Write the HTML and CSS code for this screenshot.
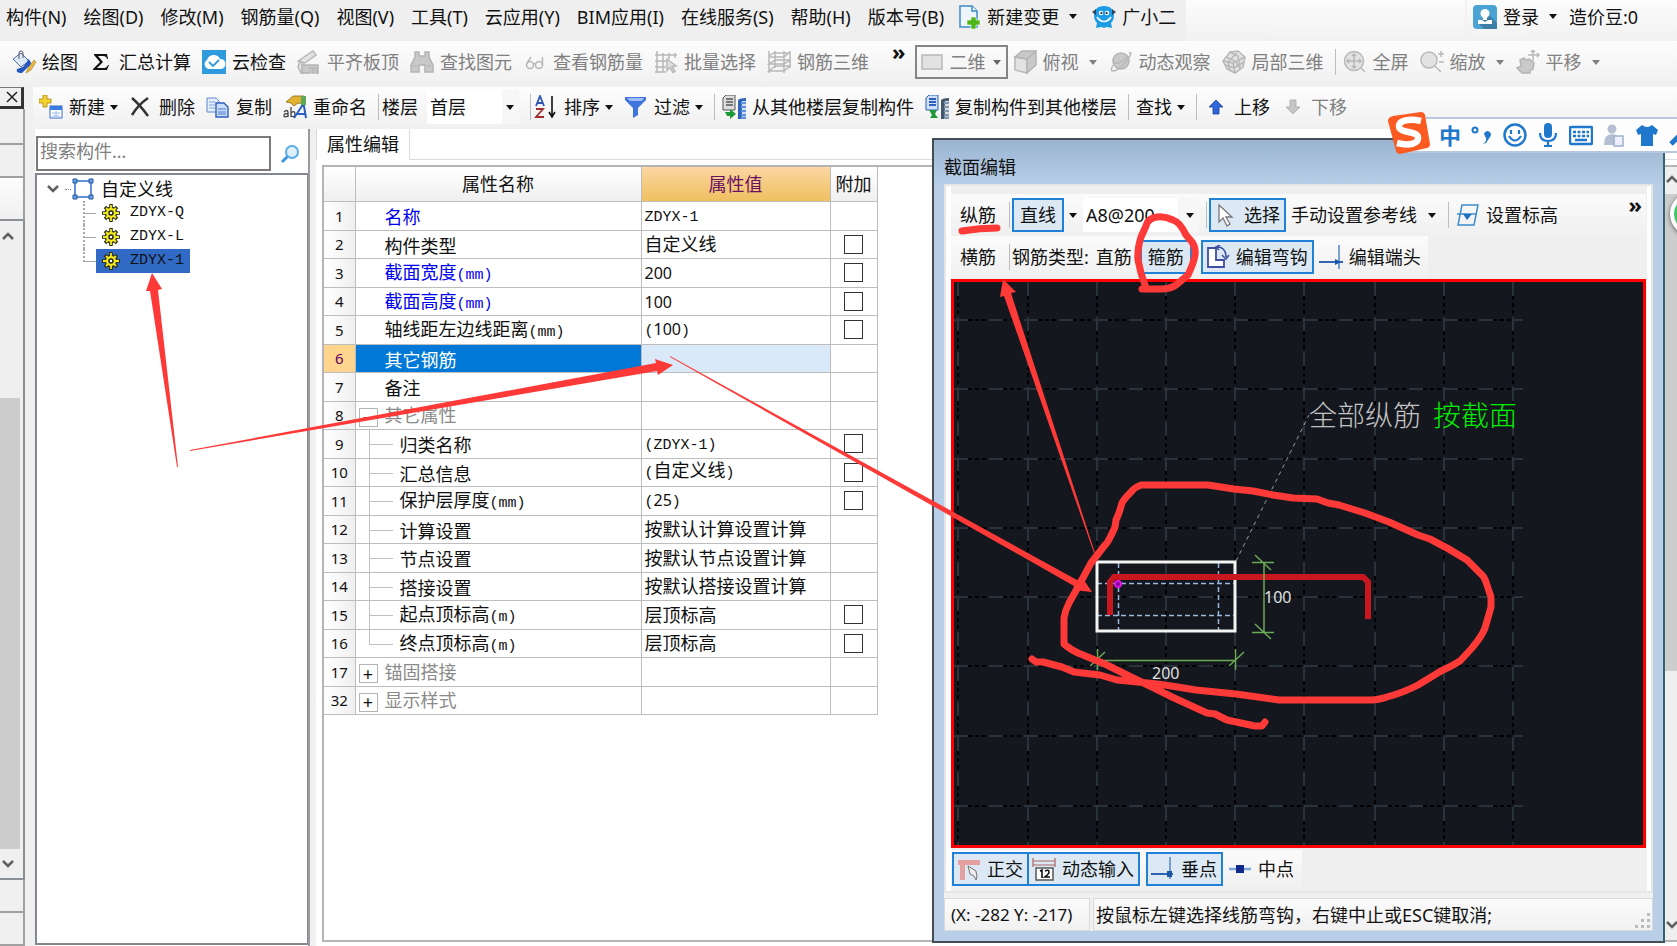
FILE: index.html
```html
<!DOCTYPE html>
<html lang="zh-CN">
<head>
<meta charset="utf-8">
<title>属性编辑</title>
<link rel="stylesheet" href="styles.css">
</head>
<body>
<header class="menubar">
  <nav class="menus">
    <button class="menu">构件(N)</button>
    <button class="menu">绘图(D)</button>
    <button class="menu">修改(M)</button>
    <button class="menu">钢筋量(Q)</button>
    <button class="menu">视图(V)</button>
    <button class="menu">工具(T)</button>
    <button class="menu">云应用(Y)</button>
    <button class="menu">BIM应用(I)</button>
    <button class="menu">在线服务(S)</button>
    <button class="menu">帮助(H)</button>
    <button class="menu">版本号(B)</button>
    <button class="tool first"><svg class="icon" viewBox="0 0 24 24"><path d="M3 1h12l5 5v16H3z" fill="#eef6fc" stroke="#3b8cc9" stroke-width="1.5"/><path d="M15 1v5h5" fill="#fff" stroke="#3b8cc9" stroke-width="1.5"/><path d="M14 12h5v3h4v5h-4v4h-5v-4h-4v-5h4z" fill="#4eb51a" stroke="#fff" stroke-width=".6"/></svg>新建变更<i class="caret wide"></i></button>
    <button class="tool"><svg class="icon" viewBox="0 0 24 24"><path d="M12 1c7 0 10 4 10 9 0 4-1 6-3 8l1 5-5-1-3 1-3-1-5 1 1-5c-2-2-3-4-3-8 0-5 3-9 10-9z" fill="#1d9ce6"/><path d="M0 7l4-3v6zM24 7l-4-3v6z" fill="#33475a"/><circle cx="9" cy="8" r="2.200" fill="#fff"/><circle cx="15" cy="8" r="2.200" fill="#fff"/><circle cx="9.400" cy="8" r="1.100" fill="#123"/><circle cx="14.600" cy="8" r="1.100" fill="#123"/><path d="M5 12c4 6 10 6 14 0" stroke="#fff" stroke-width="1.600" fill="none"/></svg>广小二</button>
  </nav>
  <div class="menufill"></div>
  <div class="account">
    <button class="tool"><svg class="icon" viewBox="0 0 24 24"><rect width="24" height="24" rx="4" fill="#4ba3d3"/><path d="M15 9l9 9v6H11l-5-5z" fill="#3b7fa6"/><circle cx="12" cy="8.500" r="4.500" fill="#fff"/><path d="M10 11h4v4h-4zM5 15h4l3 2 3-2h4v4H5z" fill="#fff"/></svg>登录<i class="caret wide"></i></button>
    <button class="menu">造价豆:0</button>
  </div>
</header>

<div class="toolbar main-tools">
  <button class="tool"><svg class="icon" viewBox="0 0 24 24"><path d="M1 9l8-6 8 8-8 6z" fill="#dfe9f6" stroke="#4a6fa5"/><path d="M7 9V3a2 2 0 0 1 4 0v5" fill="none" stroke="#556"/><path d="M16 9c4 3 4 6 0 8l-6 6c-4 0-6-1-5-4l6-2 4-5z" fill="#2456c2"/><path d="M22 10l2 2-5 8-5 3 2-5z" fill="#e8b64c" stroke="#a67a20" stroke-width=".6"/></svg>绘图</button>
  <button class="tool"><svg class="icon" viewBox="0 0 24 24"><path d="M5 4h13l1 5h-1c-.5-2-1.500-3-4-3H9l5 6-6 6h7c2 0 3-1 4-3h1l-2 5H4v-1l7-7-6-7z" fill="#111"/></svg>汇总计算</button>
  <button class="tool"><svg class="icon" viewBox="0 0 24 24"><rect width="24" height="24" fill="#2f9bdc"/><path d="M6 19a5 5 0 0 1-1-9 7 7 0 0 1 13-1 5 5 0 0 1 1 10z" fill="#fff"/><path d="M7 12l4 4 6-6" stroke="#2f9bdc" stroke-width="1.800" fill="none"/></svg>云检查</button>
  <button class="tool" disabled><svg class="icon off" viewBox="0 0 24 24"><path class="pale" d="M1 11L16 1l3 4L8 13z"/><path class="pale" d="M3 11l5 5-2 7H4l-3-6z"/><path class="solid" d="M5 15h16v8h-2v-5h-2v5h-2v-5h-2v5H5z"/></svg>平齐板顶</button>
  <button class="tool" disabled><svg class="icon off" viewBox="0 0 24 24"><path class="solid" d="M5 2h4v4h6V2h4v5l4 8v7h-8v-7H9v7H1v-7l4-8z"/><path d="M3 16h4M17 16h4" stroke="#eee"/></svg>查找图元</button>
  <button class="tool" disabled><svg class="icon off" viewBox="0 0 24 24"><circle cx="7" cy="15" r="3.500"/><circle cx="16" cy="15" r="3.500"/><path d="M3.500 14L8 7M19.500 15V7M10.500 14q1-1 2 0"/></svg>查看钢筋量</button>
  <button class="tool" disabled><svg class="icon off" viewBox="0 0 24 24"><path d="M3 1v22M1 5h22M1 11h12M1 17h11M1 22h11M9 3v19M15 3v6M21 3v5"/><path class="pale" d="M13 9l9 7-4 .5 3 5-2 1-3-5-3 3z"/></svg>批量选择</button>
  <button class="tool" disabled><svg class="icon off" viewBox="0 0 24 24"><path d="M2 1v22M8 1v17M17 1v22M23 1v17M2 6l6-4M2 7h15l6-5M8 3h15M2 21l6-5h15l-6 5zM2 14l6-4h15l-6 4z"/></svg>钢筋三维</button>
  <button class="more">»</button>
  <label class="combo view-mode"><svg class="icon off" viewBox="0 0 24 24"><rect class="pale" x="2" y="5" width="20" height="14"/></svg><select disabled aria-label="视图模式"><option>二维</option></select></label>
  <button class="tool" disabled><svg class="icon off" viewBox="0 0 24 24"><path class="pale" d="M2 7v13l12 3V9z"/><path class="solid" d="M2 7l7-6h14l-9 8zM14 9l9-8v14l-9 8z"/></svg>俯视<i class="caret wide"></i></button>
  <button class="tool" disabled><svg class="icon off" viewBox="0 0 24 24"><circle class="solid" cx="12" cy="11" r="8"/><path d="M4 15c-5 9 3 7 10 0S24 1 20 3"/><path d="M5 13c6 1 10-2 14-7" stroke="#eee"/></svg>动态观察</button>
  <button class="tool" disabled><svg class="icon off" viewBox="0 0 24 24"><path class="pale" d="M8 2l8-1 7 6-2 10-8 6-8-4-4-8z"/><path d="M1 11l10 2 2 10M11 13L23 7M8 2l8 4 2 13M4 7l9 4 6 8M3 15l9 3 10-6M8 21L6 12l9-9"/></svg>局部三维</button>
  <i class="sep"></i>
  <button class="tool" disabled><svg class="icon off" viewBox="0 0 24 24"><circle class="pale" cx="11" cy="11" r="9.500"/><path d="M11 4v14M4 11h14M9 6l2-2 2 2M9 16l2 2 2-2M6 9l-2 2 2 2M16 9l2 2-2 2"/><path d="M18 18l4 4" stroke-width="4"/></svg>全屏</button>
  <button class="tool" disabled><svg class="icon off" viewBox="0 0 24 24"><circle class="pale" cx="9" cy="10" r="8"/><path d="M15 16l6 6" stroke-width="4"/><path d="M21 1v6M18 4h6M19 12h5"/></svg>缩放<i class="caret wide"></i></button>
  <button class="tool" disabled><svg class="icon off" viewBox="0 0 24 24"><path class="solid" d="M4 10l4-2 2 2 3-1 5 4-1 6-3 2v2H6l-5-5 4-2z"/><path d="M17 0v11M12 5h11M15 2l2-2 2 2M21 3l2 2-2 2"/></svg>平移<i class="caret wide"></i></button>
</div>

<main class="workspace">
  <aside class="rail">
    <button class="rail-close" aria-label="关闭"><svg viewBox="0 0 12 12"><path d="M1 1l10 10M11 1L1 11"/></svg></button>
    <div class="rail-box top"></div>
    <div class="rail-box"></div>
    <div class="rail-box light"></div>
    <div class="rail-scroll">
      <svg class="chev" viewBox="0 0 12 12"><path d="M1 9l5-5 5 5"/></svg>
      <div class="rail-gap"></div>
      <div class="thumb"></div>
      <svg class="chev" viewBox="0 0 12 12"><path d="M1 3l5 5 5-5"/></svg>
    </div>
    <div class="rail-box"></div>
    <div class="rail-box"></div>
  </aside>
  <div class="work">
    <div class="toolbar list-tools">
      <button class="tool"><svg class="icon" viewBox="0 0 24 24"><path d="M4 0h4v4h4v4H8v4H4V8H0V4h4z" fill="#f6d22c" stroke="#a98510" stroke-width=".8"/><rect x="11" y="11" width="12" height="12" fill="#fff" stroke="#3b6fd0"/><path d="M11 11h12v4H11z" fill="#3b7be0"/><path d="M13 18h8M13 21h8M17 16v6" stroke="#9bb8e8"/></svg>新建<i class="caret"></i></button>
      <button class="tool"><svg class="icon" viewBox="0 0 24 24"><path d="M3 3q8 7 16 18M19 3Q9 10 3 20" stroke="#333" stroke-width="2.500" fill="none"/></svg>删除</button>
      <button class="tool"><svg class="icon" viewBox="0 0 24 24"><path d="M1 3h9l3 3v11H1z" fill="#e6effc" stroke="#5a86c8"/><path d="M3 7h6M3 10h6M3 13h6" stroke="#7fa3da"/><path d="M10 8h8l4 4v10H10z" fill="#c9dcf8" stroke="#2f5fb8" stroke-width="1.400"/><path d="M12 14h8M12 17h8M12 19h8" stroke="#4b7bd0"/></svg>复制</button>
      <button class="tool"><svg class="icon" viewBox="0 0 24 24"><path d="M3 7l7-6h11v8l-6-1-4 3-3-3z" fill="#e2b22e" stroke="#8a6a14" stroke-width=".8"/><path d="M18 1h5v9h-5z" fill="#5ea85a"/><path d="M1 17q3-3 4 0v5M5 19q-4-1-4 1.500T5 21M8 12v10M8 18q4-3 4 1t-4 2" stroke="#444" fill="none" stroke-width="1.300"/><path d="M11 23l8-12h2l2 12M14 19h8" stroke="#2c5fc0" stroke-width="2" fill="none"/></svg>重命名</button>
      <i class="sep tight"></i>
      <label class="lbl" for="floor">楼层</label>
      <span class="combo flat floor"><select id="floor"><option>首层</option></select></span>
      <i class="sep tight"></i>
      <button class="tool"><svg class="icon" viewBox="0 0 24 24"><path d="M2 11l4-10 4 10M3.500 8h5" stroke="#2f55b0" stroke-width="1.800" fill="none"/><path d="M2 14h7l-7 8h8" stroke="#a02c2c" stroke-width="1.800" fill="none"/><path d="M18 1v20M15 17l3 5 3-5" stroke="#111" stroke-width="1.600" fill="none"/></svg>排序<i class="caret"></i></button>
      <button class="tool"><svg class="icon" viewBox="0 0 24 24"><path d="M1 2h21v3l-8 8v7l-5 3V13L1 5z" fill="#3f74dd"/><path d="M3 3h17l-2 3H6z" fill="#9dbdf5"/></svg>过滤<i class="caret"></i></button>
      <i class="sep"></i>
      <button class="tool"><svg class="icon" viewBox="0 0 24 24"><path d="M1 3l3-3h9v15H1z" fill="#ddd" stroke="#555"/><path d="M4 4h7M4 7h7M4 10h7" stroke="#555" stroke-width="1.500"/><path d="M16 5q2-2 8-2v3h-4v18h-4z" fill="#2f64b8"/><path d="M19 8h5M19 12h5M19 16h5M19 20h5M19 23h5" stroke="#5d93dc" stroke-width="2.500"/><path d="M3 17h5v-3l6 5-6 5v-3H5z" fill="#1d9a35"/></svg>从其他楼层复制构件</button>
      <button class="tool"><svg class="icon" viewBox="0 0 24 24"><path d="M1 3l3-3h9v15H1z" fill="#cfe0fb" stroke="#2f5fb8"/><path d="M4 4h7M4 7h7M4 10h7" stroke="#2f5fb8" stroke-width="1.800"/><path d="M16 5q2-2 8-2v3h-4v18h-4z" fill="#43586f"/><path d="M19 8h5M19 12h5M19 16h5M19 20h5M19 23h5" stroke="#7f97b0" stroke-width="2.500"/><path d="M4 15l8 0-2 4 3 4H5l2-3z" fill="#1d9a35"/></svg>复制构件到其他楼层</button>
      <i class="sep"></i>
      <button class="tool">查找<i class="caret"></i></button>
      <i class="sep"></i>
      <button class="tool"><svg class="icon" viewBox="0 0 24 24"><path d="M12 5l7 7h-4v7H9v-7H5z" fill="#2f66d8" stroke="#1d449a" stroke-width=".8"/></svg>上移</button>
      <button class="tool" disabled><svg class="icon" viewBox="0 0 24 24"><path d="M12 19l-7-7h4V5h6v7h4z" fill="#c6c6c6" stroke="#aaa" stroke-width=".8"/></svg>下移</button>
    </div>
    <div class="panes">
      <section class="tree-pane">
        <div class="search">
          <input type="text" placeholder="搜索构件…" aria-label="搜索构件">
          <button class="search-btn" aria-label="搜索"><svg viewBox="0 0 20 20"><path d="M8 12l-6 6" stroke="#3d94dc" stroke-width="3"/><circle cx="12" cy="8" r="6" fill="#dff0fc" stroke="#58aee8" stroke-width="2"/></svg></button>
        </div>
        <div class="tree">
          <div class="node root">
            <svg class="chev" viewBox="0 0 12 12"><path d="M1 3l5 5 5-5"/></svg>
            <i class="dots"></i>
            <svg class="shape" viewBox="0 0 22 22"><path d="M3 3h16v16H3z" fill="#fff" stroke="#2f6fc4" stroke-width="1.500"/><path d="M1 1h4v4H1zM17 1h4v4h-4zM1 17h4v4H1zM17 17h4v4h-4z" fill="#6ea0e0" stroke="#1c56a8"/></svg>
            <span>自定义线</span>
          </div>
          <div class="node leaf"><i class="dots"></i><button class="item"><svg class="gear" viewBox="0 0 18 18"><path d="M9 0v18M0 9h18M3 3l12 12M15 3L3 15" stroke="#2b2b10" stroke-width="3.500"/><circle cx="9" cy="9" r="6.500" fill="#333"/><path d="M9 1v16M1 9h16M4 4l10 10M14 4L4 14" stroke="#f2e91e" stroke-width="1.800"/><circle cx="9" cy="9" r="5" fill="#f2e91e"/><circle cx="9" cy="9" r="2" fill="#fff" stroke="#222" stroke-width="1.500"/></svg>ZDYX-Q</button></div>
          <div class="node leaf"><i class="dots"></i><button class="item"><svg class="gear" viewBox="0 0 18 18"><path d="M9 0v18M0 9h18M3 3l12 12M15 3L3 15" stroke="#2b2b10" stroke-width="3.500"/><circle cx="9" cy="9" r="6.500" fill="#333"/><path d="M9 1v16M1 9h16M4 4l10 10M14 4L4 14" stroke="#f2e91e" stroke-width="1.800"/><circle cx="9" cy="9" r="5" fill="#f2e91e"/><circle cx="9" cy="9" r="2" fill="#fff" stroke="#222" stroke-width="1.500"/></svg>ZDYX-L</button></div>
          <div class="node leaf last"><i class="dots"></i><button class="item selected"><svg class="gear" viewBox="0 0 18 18"><path d="M9 0v18M0 9h18M3 3l12 12M15 3L3 15" stroke="#2b2b10" stroke-width="3.500"/><circle cx="9" cy="9" r="6.500" fill="#333"/><path d="M9 1v16M1 9h16M4 4l10 10M14 4L4 14" stroke="#f2e91e" stroke-width="1.800"/><circle cx="9" cy="9" r="5" fill="#f2e91e"/><circle cx="9" cy="9" r="2" fill="#fff" stroke="#222" stroke-width="1.500"/></svg>ZDYX-1</button></div>
        </div>
      </section>
      <section class="props">
        <div class="tabs"><button class="tab">属性编辑</button><div class="tabfill"></div></div>
        <div class="sheet">
          <table class="grid">
            <colgroup><col class="c-no"><col class="c-name"><col class="c-val"><col class="c-add"></colgroup>
            <thead><tr><th></th><th>属性名称</th><th class="hot">属性值</th><th>附加</th></tr></thead>
            <tbody>
              <tr><th>1</th><td class="name key">名称</td><td><span class="mono">ZDYX-1</span></td><td></td></tr>
              <tr><th>2</th><td class="name">构件类型</td><td>自定义线</td><td class="chk"><input type="checkbox" aria-label="构件类型"></td></tr>
              <tr><th>3</th><td class="name key">截面宽度<span class="mono">(mm)</span></td><td><span class="num">200</span></td><td class="chk"><input type="checkbox" aria-label="截面宽度"></td></tr>
              <tr><th>4</th><td class="name key">截面高度<span class="mono">(mm)</span></td><td><span class="num">100</span></td><td class="chk"><input type="checkbox" aria-label="截面高度"></td></tr>
              <tr><th>5</th><td class="name">轴线距左边线距离<span class="mono">(mm)</span></td><td><span class="mono">(</span><span class="num">100</span><span class="mono">)</span></td><td class="chk"><input type="checkbox" aria-label="轴线距左边线距离"></td></tr>
              <tr class="current"><th>6</th><td class="name">其它钢筋</td><td></td><td></td></tr>
              <tr><th>7</th><td class="name">备注</td><td></td><td></td></tr>
              <tr><th>8</th><td class="name group open"><button class="exp" aria-label="收起">−</button>其它属性</td><td></td><td></td></tr>
              <tr><th>9</th><td class="name sub">归类名称</td><td><span class="mono">(ZDYX-1)</span></td><td class="chk"><input type="checkbox" aria-label="归类名称"></td></tr>
              <tr><th>10</th><td class="name sub">汇总信息</td><td><span class="mono">(</span>自定义线<span class="mono">)</span></td><td class="chk"><input type="checkbox" aria-label="汇总信息"></td></tr>
              <tr><th>11</th><td class="name sub">保护层厚度<span class="mono">(mm)</span></td><td><span class="mono">(</span><span class="num">25</span><span class="mono">)</span></td><td class="chk"><input type="checkbox" aria-label="保护层厚度"></td></tr>
              <tr><th>12</th><td class="name sub">计算设置</td><td>按默认计算设置计算</td><td></td></tr>
              <tr><th>13</th><td class="name sub">节点设置</td><td>按默认节点设置计算</td><td></td></tr>
              <tr><th>14</th><td class="name sub">搭接设置</td><td>按默认搭接设置计算</td><td></td></tr>
              <tr><th>15</th><td class="name sub">起点顶标高<span class="mono">(m)</span></td><td>层顶标高</td><td class="chk"><input type="checkbox" aria-label="起点顶标高"></td></tr>
              <tr><th>16</th><td class="name sub end">终点顶标高<span class="mono">(m)</span></td><td>层顶标高</td><td class="chk"><input type="checkbox" aria-label="终点顶标高"></td></tr>
              <tr><th>17</th><td class="name group"><button class="exp" aria-label="展开">+</button>锚固搭接</td><td></td><td></td></tr>
              <tr><th>32</th><td class="name group"><button class="exp" aria-label="展开">+</button>显示样式</td><td></td><td></td></tr>
            </tbody>
          </table>
          <div class="vscroll">
            <svg class="chev" viewBox="0 0 12 12"><path d="M1 9l5-5 5 5"/></svg>
            <div class="thumb"></div>
            <svg class="chev bottom" viewBox="0 0 12 12"><path d="M1 3l5 5 5-5"/></svg>
          </div>
        </div>
      </section>
    </div>
  </div>
</main>

<div class="bubble"></div>

<section class="dialog">
  <h1 class="title">截面编辑</h1>
  <div class="dialog-body">
    <div class="dbar">
      <button class="dtool plain">纵筋</button>
      <i class="sep tight"></i>
      <button class="dtool on">直线</button><i class="caret solo"></i>
      <span class="combo flat rebar"><select aria-label="钢筋信息"><option>A8@200</option></select></span>
      <i class="sep tight"></i>
      <button class="dtool on"><svg class="icon" viewBox="0 0 24 24"><path d="M5 2v17l4-4 4 8 3-2-4-7h6z" fill="#fff" stroke="#777" stroke-width="1.300"/></svg>选择</button>
      <button class="dtool">手动设置参考线<i class="caret wide"></i></button>
      <i class="sep"></i>
      <button class="dtool"><svg class="icon" viewBox="0 0 24 24"><path d="M6 2h16l-4 20H2z" fill="none" stroke="#3b8cc9" stroke-width="1.500"/><path d="M1 11h19" stroke="#3b8cc9" stroke-width="1.500"/><path d="M7 11h9l-5 6z" fill="#1d72c0"/></svg>设置标高</button>
      <button class="more end">»</button>
    </div>
    <div class="dbar short">
      <button class="dtool plain">横筋</button>
      <i class="sep tight"></i>
      <span class="lbl">钢筋类型:</span>
      <button class="dtool plain">直筋</button>
      <button class="dtool on narrow">箍筋</button>
      <button class="dtool on hook"><svg class="icon" viewBox="0 0 24 24"><path d="M2 3h8v12h8v7H2z" fill="#fff" stroke="#3d4f9e" stroke-width="1.800"/><path d="M11 2q9 0 9 10M14 0l-4 2 3 3M16 10l4 4 3-4" stroke="#3d4f9e" fill="none" stroke-width="1.500"/></svg>编辑弯钩</button>
      <button class="dtool"><svg class="icon" viewBox="0 0 24 24"><path d="M0 17h24" stroke="#1d55a8" stroke-width="1.800"/><path d="M20 0v24" stroke="#4d84c8" stroke-width="1.500"/><path d="M16 14l6 3-6 3z" fill="#1d55a8"/></svg>编辑端头</button>
    </div>
    <div class="canvas">
      <svg class="drawing" aria-label="截面图">
        <g transform="translate(-954 -282)">
          <g class="black"><path d="M958 282V846M1028 282V846M1097 282V846M1166 282V846M1235 282V846M1304 282V846M1375 282V846M1444 282V846M1513 282V846M954 320H1523M954 389H1523M954 459H1523M954 528H1523M954 597H1523M954 666H1523M954 736H1523M954 806H1523"/></g>
          <g class="slate"><path d="M958 282V846M1028 282V846M1097 282V846M1166 282V846M1235 282V846M1304 282V846M1375 282V846M1444 282V846M1513 282V846M954 320H1523M954 389H1523M954 459H1523M954 528H1523M954 597H1523M954 666H1523M954 736H1523M954 806H1523"/></g>
          <path d="M1236 561L1309 415" stroke="#999" stroke-dasharray="4 4"/>
          <path d="M1118.500 563V631M1218.500 563V631M1097 583.500H1235M1097 615.500H1235" stroke="#9ab8dd" stroke-width="1.500" stroke-dasharray="5 3"/>
          <rect x="1097" y="562" width="138" height="69" fill="none" stroke="#f4f4f4" stroke-width="3"/>
          <path d="M1110 615V582l4-5H1363l5 5V619" fill="none" stroke="#c8171e" stroke-width="6"/>
          <circle cx="1118" cy="584" r="3" fill="#7a1090" stroke="#e010e0" stroke-width="2"/>
          <path d="M1264 562V632M1252 562.500H1274M1252 632.500H1274M1255 555l16 15M1255 624l16 15M1097 660.500H1235M1097.500 649V670M1235.500 649V670M1090 666l15-14M1229 666l15-14" fill="none" stroke="#6cab56" stroke-width="1.500"/>
          <text class="dim" x="1264" y="603">100</text>
          <text class="dim" x="1152" y="679">200</text>
          <text class="note" x="1309" y="426">全部纵筋</text>
          <text class="note green" x="1433" y="426">按截面</text>
        </g>
      </svg>
    </div>
    <div class="dbar snaps">
      <button class="dtool on"><svg class="icon" viewBox="0 0 24 24"><path d="M1 3h22v5H8v15H3V8H1z" fill="#e2a0a0"/><path d="M11 9l8 5 1 6-1 3-2-4-4-2z" fill="#eee" stroke="#666" stroke-width=".9"/></svg>正交</button>
      <button class="dtool on join"><svg class="icon" viewBox="0 0 24 24"><path d="M1 1v9M23 1v9M1 4h22M1 8h22" stroke="#a66" stroke-width="1.200"/><rect x="4" y="11" width="17" height="12" fill="#fff" stroke="#555" stroke-width="1.500"/><path d="M8 14l2-1v8M13 14q4-2 4 1 0 2-4 5h5" fill="none" stroke="#111" stroke-width="1.600"/></svg>动态输入</button>
      <button class="dtool on apart"><svg class="icon" viewBox="0 0 24 24"><path d="M0 17h22" stroke="#1d55a8" stroke-width="1.800"/><path d="M19 0v22" stroke="#4d84c8" stroke-width="1.500"/><path d="M16 14h5v6h-5z" fill="#1d55a8"/></svg>垂点</button>
      <button class="dtool"><svg class="icon" viewBox="0 0 24 24"><path d="M1 12h22" stroke="#7ba5dc" stroke-width="2.500"/><path d="M8 8h8v8H8z" fill="#12298c"/></svg>中点</button>
    </div>
  </div>
  <footer class="status"><span class="coords">(X: -282 Y: -217)</span><span class="hint">按鼠标左键选择线筋弯钩，右键中止或ESC键取消;<svg class="grip" viewBox="0 0 18 18"><path d="M13 1h3v3h-3zM13 7h3v3h-3zM7 7h3v3H7zM13 13h3v3h-3zM7 13h3v3H7zM1 13h3v3H1z"/></svg></span></footer>
</section>

<div class="ime">
  <svg class="ime-logo" viewBox="0 0 42 42"><path d="M5 4L33 0q3 0 4 3l5 29q0 3-3 4L12 42q-3 0-4-3L0 9q0-4 5-5z" fill="#fb5a20"/><path d="M33 9C20 6 10 9 11 15c1 6 18 4 19 10 1 7-9 9-21 6" fill="none" stroke="#fff" stroke-width="6.500"/></svg>
  <span class="ime-zh">中</span>
  <svg class="icon" viewBox="0 0 24 24"><circle cx="5" cy="7" r="2.500" fill="none" stroke="#1f78cc" stroke-width="2"/><path d="M14 11a3.500 3.500 0 1 1 6 3l-4 6-3 1q4-3 3-6z" fill="#1f78cc"/></svg>
  <svg class="icon" viewBox="0 0 24 24"><circle cx="12" cy="12" r="10.500" fill="none" stroke="#1f78cc" stroke-width="2.500"/><path d="M8 7v4M16 7v4M6 13q6 9 12 0" fill="none" stroke="#1f78cc" stroke-width="2.200"/></svg>
  <svg class="icon" viewBox="0 0 24 24"><rect x="8" y="0" width="8" height="15" rx="4" fill="#1f78cc"/><path d="M4 10q0 8 8 8t8-8M12 18v5M8 23h8" fill="none" stroke="#1f78cc" stroke-width="2.200"/></svg>
  <svg class="icon" viewBox="0 0 24 24"><rect x="1" y="4" width="22" height="17" rx="1" fill="#fff" stroke="#1f78cc" stroke-width="2.500"/><path d="M4 9h16M4 13h16" stroke="#1f78cc" stroke-width="2.500" stroke-dasharray="3 1.500"/><path d="M6 17h12" stroke="#1f78cc" stroke-width="2.500"/></svg>
  <svg class="icon" viewBox="0 0 24 24"><circle cx="10" cy="6" r="4.500" fill="#b4bfd4"/><path d="M2 22q0-11 8-11t8 11z" fill="#b4bfd4"/><rect x="12" y="13" width="9" height="10" fill="#eef" stroke="#9fb0cc" stroke-width="1.500"/></svg>
  <svg class="icon" viewBox="0 0 24 24"><path d="M7 2q5 4 10 0l6 5-2 5-3-1v12H6V11l-3 1-2-5z" fill="#1f78cc"/></svg>
  <svg class="icon" viewBox="0 0 24 24"><path d="M3 21L16 8" stroke="#1f78cc" stroke-width="5"/><circle cx="17" cy="7" r="5" fill="#1f78cc"/></svg>
</div>

<svg class="ink" aria-hidden="true">
  <g fill="#fd3a38">
    <path d="M152 273l10 16-4 1 20 177h-1L150 291l-4 0z"/>
    <path d="M190 450L656 363l-1-4 18 6-15 10-1-4L190 451z"/>
    <path d="M670 356L1077 580l5-3 10 15-19-2 1-4L670 357z"/>
    <path d="M1094 553L1004 296l-4 1 3-18 13 13-5 1 84 260z"/>
  </g>
  <g fill="none" stroke="#fd3a38" stroke-width="7" stroke-linecap="round" stroke-linejoin="round">
    <path d="M962 231Q980 228 997 228"/>
    <path d="M1142 289H1161Q1170 289 1176 285L1188 275Q1194 262 1195 255T1192 242L1186 235Q1180 222 1173 220 1165 216 1157 217 1148 218 1146 226L1141 237Q1137 250 1138 260L1141 273 1146 288"/>
    <path d="M1032 659L1036 662 1043 662 1062 667 1074 672 1100 675 1117 680 1148 683 1165 685 1196 690 1236 694 1279 700H1372Q1382 699 1387 697 1405 692 1418 685L1441 671Q1452 666 1460 661L1472 648Q1482 636 1485 628L1491 607V597L1486 582Q1484 576 1480 573L1467 560Q1450 549 1430 539L1418 535 1389 522 1365 513 1339 505 1328 503 1317 499 1293 498 1273 495 1253 491 1234 489 1208 485H1141Q1135 487 1131 492 1124 499 1122 503L1119 513 1116 520 1115 527Q1108 543 1105 545L1091 563 1078 587 1069 603Q1065 611 1064 618V644Q1072 651 1083 655L1107 665 1131 677 1152 687 1172 697 1207 713 1215 714 1227 720 1255 726H1262L1265 722"/>
  </g>
</svg>
</body>
</html>
```
FILE: styles.css
```css
* { box-sizing: border-box; }

body {
  margin: 0;
  height: 100vh;
  display: flex;
  flex-direction: column;
  position: relative;
  overflow: hidden;
  background: #f0f0f0;
  color: #111;
  font: 18px/24px "Noto Sans", "Noto Sans CJK SC", sans-serif;
}

button, select, input {
  font: inherit;
  color: inherit;
  border: 0;
  padding: 0;
  margin: 0;
  background: none;
  white-space: nowrap;
}

select { appearance: none; opacity: 1; }
svg { display: block; flex: none; }

.icon { width: 24px; height: 24px; }
.off path, .off circle, .off rect { fill: none; stroke: #b8b8b8; stroke-width: 1.5; }
.off .solid { fill: #c9c9c9; stroke: #b4b4b4; }
.off .pale { fill: #e2e2e2; }

/* Menu bar */
.menubar { display: flex; height: 41px; flex: none; }
.menus { display: flex; align-items: center; gap: 17px; padding: 0 10px 8px 6px; background: #efefef; }
.menus .tool { margin-left: -6px; }
.menus .first { margin-left: -4px; }
.menufill { flex: 1; background: linear-gradient(#fcfcfc, #f1f1f1); }
.account {
  display: flex;
  align-items: center;
  gap: 8px;
  width: 212px;
  padding: 0 8px 8px 6px;
  border-left: 2px solid #f3f3f3;
  background: linear-gradient(#fcfcfc, #f1f1f1);
}

.tool { display: flex; align-items: center; gap: 6px; }
.tool:disabled { color: #808080; }

.caret {
  width: 0;
  height: 0;
  flex: none;
  border: 4px solid transparent;
  border-top: 5px solid currentColor;
  border-bottom: 0;
  margin-left: -1px;
}
.caret.wide { margin: 0 4px; }

.toolbar {
  display: flex;
  align-items: center;
  gap: 11px;
  flex: none;
  background: linear-gradient(#fdfdfd, #f0f0f0);
}
.main-tools { height: 44px; margin-bottom: 2px; padding: 0 0 2px 12px; }
.main-tools .caret.wide { margin-right: 1px; }
.sep { width: 1px; height: 26px; flex: none; background: #bdbdbd; }
.main-tools .sep { margin-right: -4px; }
.list-tools .sep { margin-right: -4px; }
.toolbar .sep.tight, .sep.tight { margin-right: -8px; }
.more { font-size: 22px; font-weight: 700; line-height: 20px; align-self: flex-start; margin: 0 0 0 12px; }

.combo { display: flex; align-items: center; position: relative; height: 34px; }
.combo select { flex: 1; min-width: 0; height: 100%; }
.combo::after {
  content: "";
  position: absolute;
  right: 5px;
  border: 4px solid transparent;
  border-top: 5px solid #111;
  border-bottom: 0;
  pointer-events: none;
}
.combo.flat { background: linear-gradient(to right, #fff 82%, #f7f7f7 82%); padding-left: 3px; }
.view-mode { width: 93px; border: 2px solid #858585; padding-left: 3px; gap: 6px; color: #808080; margin: 0 -6px 0 -2px; }
.view-mode::after { border-top-color: #666; }
.floor { width: 92px; margin-left: -2px; }
.rebar { width: 116px; }

/* Workspace */
.workspace { flex: 1; display: flex; min-height: 0; }

.rail { width: 25px; flex: none; display: flex; flex-direction: column; margin-right: 8px; }
.rail-close { width: 24px; height: 22px; border: 1px solid #777; border-left: 0; border-width: 1px 3px 3px 0; border-color: #777 #333 #333; padding-left: 2px; }
.rail-close svg { width: 12px; height: 12px; margin: 0 auto; }
.rail-close path { stroke: #222; stroke-width: 1.5; }
.rail-box { height: 33px; flex: none; border-right: 2px solid #a0a0a0; border-bottom: 2px solid #a0a0a0; }
.rail-box.top { height: 36px; }
.rail-box.light { height: 41px; border-bottom: 0; background: linear-gradient(#fdfdfd, #f0f0f0); }
.rail-scroll { flex: 1; display: flex; flex-direction: column; border: 2px solid #8a9096; border-left: 0; padding-right: 3px; background: #efefef; }
.rail-scroll .thumb { flex: 1; }
.rail-gap { height: 148px; }
.thumb { background: #cdcdcd; }
.chev { width: 12px; height: 12px; margin: 9px 2px 8px; }
.chev path { fill: none; stroke: #606060; stroke-width: 2.5; }
.rail-scroll .chev { margin: 9px 0 8px 2px; }

.work { flex: 1; min-width: 0; display: flex; flex-direction: column; }
.list-tools { height: 42px; padding: 0 0 2px 6px; }
.panes { flex: 1; display: flex; min-height: 0; }

/* Component tree */
.tree-pane { width: 277px; flex: none; display: flex; flex-direction: column; padding: 4px 0 1px 2px; border-right: 2px solid #9a9a9f; background: linear-gradient(to right, #f0f0f0 2px, #fff 2px); }
.search { display: flex; height: 40px; padding: 3px 0 2px 1px; }
.search input { width: 235px; border: 2px solid #7a7a7a; padding: 0 2px 6px; background: #fff; }
.search input::placeholder { color: #808080; opacity: 1; }
.search-btn { flex: 1; }
.search-btn svg { width: 20px; height: 20px; margin: 0 auto; }
.tree { flex: 1; border: 2px solid #828790; border-right-width: 1px; padding: 2px 0 0 10px; background: #fff; }
.node { display: flex; align-items: center; height: 24px; }
.root { color: #111; }
.root .chev { margin: 0 6px 0 0; }
.root .dots { width: 6px; border-top: 1px dotted #888; }
.root .shape { width: 22px; height: 22px; margin: 0 7px 0 1px; }
.leaf { padding-left: 36px; }
.leaf .dots { width: 13px; height: 24px; border-left: 2px dotted #aaa; background: linear-gradient(#aaa, #aaa) 0 12px / 100% 1px no-repeat; }
.leaf.last .dots { height: 13px; align-self: flex-start; }
.item { display: flex; align-items: center; gap: 10px; height: 24px; padding: 0 6px; font: 15px/26px "Liberation Mono", monospace; }
.item.selected { background: #316ac5; }
.gear { width: 18px; height: 18px; }

/* Property sheet */
.props { flex: 1; min-width: 0; display: flex; flex-direction: column; margin-left: 6px; background: #fff; }
.tabs { display: flex; height: 31px; flex: none; }
.tab { width: 94px; border: 1px solid #dcdcdc; border-bottom: 0; border-top: 0; padding-bottom: 1px; background: #fff; }
.tabfill { flex: 1; border-bottom: 1px solid #dcdcdc; }
.sheet { flex: 1; display: flex; justify-content: space-between; margin: 5px 0 4px 6px; border: 2px solid #b4b4b8; border-right: 0; min-height: 0; }
.grid { border-collapse: collapse; table-layout: fixed; width: 553px; align-self: flex-start; }
.c-no { width: 31px; }
.c-name { width: 286px; }
.c-val { width: 189px; }
.c-add { width: 47px; }
.grid th, .grid td { border: 1px solid #bdbdbd; height: inherit; padding: 0; font-weight: 400; line-height: 20px; }
.grid thead th { border-top: 0; background: linear-gradient(#fff, #efefef); }
.grid thead tr { height: 34px; }
.grid tbody tr { height: 28px; }
.grid tbody tr:nth-child(odd) { height: 29px; }
.grid tr > :first-child { border-left: 0; }
.grid tbody th { background: linear-gradient(to right, #fff, #efefef); font-size: 15px; }
.grid td { padding-left: 3px; }
.grid thead .hot { background: linear-gradient(#fad6a2, #efbf60); color: #6a1060; }
.grid .name { padding: 3px 0 0 29px; }
.grid .key { color: #0000f0; }
.grid .sub {
  padding-left: 44px;
  background:
    linear-gradient(#c0c0c0, #c0c0c0) 13px 0 / 1px 100% no-repeat,
    linear-gradient(#c0c0c0, #c0c0c0) 13px 14px / 24px 1px no-repeat;
}
.grid .sub.end {
  background:
    linear-gradient(#c0c0c0, #c0c0c0) 13px 0 / 1px 15px no-repeat,
    linear-gradient(#c0c0c0, #c0c0c0) 13px 14px / 24px 1px no-repeat;
}
.grid .group { padding: 2px 0 0 3px; color: #8a8a8a; }
.exp { width: 19px; height: 19px; margin-right: 7px; border: 1px solid #b4b4b4; background: #fff; color: #111; font-size: 18px; line-height: 16px; vertical-align: middle; }
.grid .current th { background: #ffd48c; color: #600060; }
.grid .current .name { background: #0078d7; color: #fff; }
.grid .current .name + td { background: #d9e9f8; }
.grid .chk { padding: 0; text-align: center; }
.chk input { appearance: none; display: block; width: 19px; height: 19px; margin: 0 auto; border: 1px solid #333; background: #fff; }
.mono { font-family: "Liberation Mono", monospace; font-size: 15px; }
.num { font-size: 16px; }

.vscroll { width: 12px; display: flex; flex-direction: column; overflow: hidden; background: #efefef; }
.vscroll .chev { margin: 6px 1px 9px; }
.vscroll .thumb { height: 477px; }
.vscroll .bottom { margin-top: auto; }
.bubble { position: absolute; top: 192px; right: -37px; width: 44px; height: 44px; border-radius: 50%; border: 4px solid #fff; background: #3fc463; box-shadow: 0 1px 4px #555; }

/* Floating section editor */
.dialog {
  position: absolute;
  left: 932px;
  right: 12px;
  top: 138px;
  bottom: 3px;
  display: flex;
  flex-direction: column;
  padding: 0 10px 10px;
  border: 2px solid #444c55;
  border-right-color: #35636f;
  background: linear-gradient(#9ab4d0, #b9cfe8 46px);
}
.title { margin: 0; height: 44px; font-size: 18px; font-weight: 400; line-height: 54px; }
.dialog-body { flex: 1; display: flex; flex-direction: column; padding: 8px 5px 3px; border: 2px solid #e6e6e6; background: linear-gradient(to right, #fff 5px, #efefef 5px, #efefef calc(100% - 4px), #fff calc(100% - 4px)); min-height: 0; }
.dbar { display: flex; align-items: center; height: 42px; flex: none; padding-left: 2px; background: linear-gradient(#fbfbfb, #f0f0f0); }
.dbar.short { align-self: flex-start; padding-right: 2px; }
.dtool { display: flex; align-items: center; gap: 6px; height: 34px; padding: 0 5px; }
.dtool.on { border: 2px solid #1f82d6; background: #dce9f5; padding: 0 4px 0 3px; }
.dtool.on:not(:has(svg)) { padding: 0 6px; }
.dtool.narrow { margin-left: 1px; }
.dtool.hook { margin-left: 9px; }
.dbar .plain { padding: 0 7px; }
.dbar .sep { margin: 0 2px 0 6px; }
.caret.solo { margin: 0 6px 0 5px; }
.dbar .flat { margin: 0 1px 0 0; }
.dbar .more.end { margin: 0 4px 0 auto; }
.dtool .caret.wide { margin: 0 1px 0 5px; }
.canvas { flex: 1; min-height: 0; margin-top: 1px; border: 3px solid #f00; background: #14171e; overflow: hidden; }
.drawing { width: 100%; height: 100%; }
.black path { fill: none; stroke: #000; stroke-width: 2; stroke-dasharray: 4 3; }
.slate path { fill: none; stroke: #2a323c; stroke-width: 2; stroke-dasharray: 14 21; }
.dim { fill: #e0e0e0; font-size: 16px; }
.note { fill: #c4c4c4; font-size: 28px; font-weight: 300; }
.note.green { fill: #0e0; }
.snaps { align-self: flex-start; height: 38px; margin-top: 2px; padding: 0 3px 0 1px; }
.snaps .join { margin-left: -2px; }
.snaps .apart { margin-left: 6px; }
.status { display: flex; gap: 3px; height: 38px; padding-top: 5px; flex: none; background: #f0f0f0; }
.status span { display: flex; align-items: center; border: 1px solid #dadada; background: linear-gradient(#fbfbfb, #f1f1f1); }
.coords { width: 146px; padding-left: 6px; font-size: 17px; }
.hint { flex: 1; padding-left: 2px; }
.grip { width: 18px; height: 18px; margin-left: auto; align-self: flex-end; }
.grip path { fill: #bcbcbc; }

/* Input method bar */
.ime {
  position: absolute;
  left: 1408px;
  right: 0;
  top: 117px;
  height: 36px;
  display: flex;
  align-items: center;
  gap: 9px;
  border: 2px solid #b9c7dc;
  border-right: 0;
  background: #fdfdfe;
}
.ime-logo { width: 42px; height: 42px; margin-left: -22px; margin-top: -4px; }
.ime-zh { color: #1f78cc; font-size: 22px; font-weight: 700; }

.ink { position: absolute; inset: 0; width: 100%; height: 100%; pointer-events: none; }
```
